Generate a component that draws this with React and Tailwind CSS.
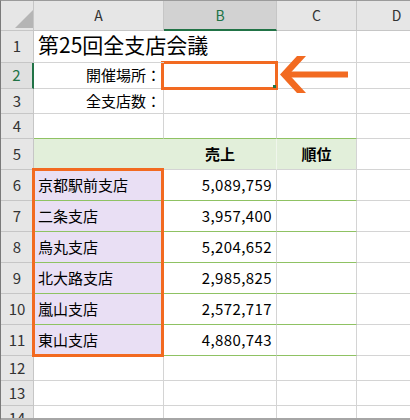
import React from "react";

const hdr = "bg-[#e6e6e6] border-r border-b border-[#c6c6c6] flex items-center justify-center text-[14px] text-[#333]";
const cell = "border-r border-b border-[#d4d4d4] flex items-center whitespace-nowrap";

const data = [
  ["京都駅前支店", "5,089,759"],
  ["二条支店", "3,957,400"],
  ["烏丸支店", "5,204,652"],
  ["北大路支店", "2,985,825"],
  ["嵐山支店", "2,572,717"],
  ["東山支店", "4,880,743"],
];

function RowHead({ n, sel }) {
  return (
    <div
      className={
        sel
          ? "bg-[#e0e0e0] border-r-2 border-b border-r-[#217346] border-b-[#c6c6c6] flex items-center justify-center text-[15px] text-[#217346]"
          : "bg-[#e6e6e6] border-r border-b border-[#c6c6c6] flex items-center justify-center text-[15px] text-[#333]"
      }
    >
      {n}
    </div>
  );
}

export default function App() {
  const rows = [];
  rows.push(
    <React.Fragment key="r1">
      <RowHead n={1} />
      <div className="border-b border-[#d4d4d4] flex items-center pl-[4px] pb-[3px] whitespace-nowrap text-[21px] text-black overflow-visible z-10">
        第25回全支店会議
      </div>
      <div className={cell}></div>
      <div className={cell}></div>
      <div className={cell}></div>
    </React.Fragment>
  );
  rows.push(
    <React.Fragment key="r2">
      <RowHead n={2} sel />
      <div className={cell + " justify-end pr-[2px] text-[15px] text-black"}>開催場所：</div>
      <div className={cell}></div>
      <div className={cell}></div>
      <div className={cell}></div>
    </React.Fragment>
  );
  rows.push(
    <React.Fragment key="r3">
      <RowHead n={3} />
      <div className={cell + " justify-end pr-[2px] text-[15px] text-black"}>全支店数：</div>
      <div className={cell}></div>
      <div className={cell}></div>
      <div className={cell}></div>
    </React.Fragment>
  );
  rows.push(
    <React.Fragment key="r4">
      <RowHead n={4} />
      <div className="border-r border-b border-r-[#d4d4d4] border-b-[#8fc263]"></div>
      <div className="border-r border-b border-r-[#d4d4d4] border-b-[#8fc263]"></div>
      <div className="border-r border-b border-r-[#d4d4d4] border-b-[#8fc263]"></div>
      <div className={cell}></div>
    </React.Fragment>
  );
  rows.push(
    <React.Fragment key="r5">
      <RowHead n={5} />
      <div className="bg-[#e2efda] border-r border-b border-r-[#e2efda] border-b-[#d4d4d4]"></div>
      <div className="bg-[#e2efda] border-r border-b border-r-[#f0f6ec] border-b-[#d4d4d4] flex items-center justify-center font-bold text-[15px] text-black">
        売上
      </div>
      <div className="bg-[#e2efda] border-r border-b border-[#d4d4d4] flex items-center justify-center font-bold text-[15px] text-black">
        順位
      </div>
      <div className={cell}></div>
    </React.Fragment>
  );
  data.forEach(([name, val], i) => {
    rows.push(
      <React.Fragment key={"d" + i}>
        <RowHead n={6 + i} />
        <div className="bg-[#e9dff4] border-r border-b border-r-[#d4d4d4] border-b-[#8fc263] flex items-center pl-[4px] whitespace-nowrap text-[15px] text-black">
          {name}
        </div>
        <div className="border-r border-b border-r-[#d4d4d4] border-b-[#8fc263] flex items-center justify-end pr-[4px] tracking-[0.4px] text-[15px] text-black">
          {val}
        </div>
        <div className="border-r border-b border-r-[#d4d4d4] border-b-[#8fc263]"></div>
        <div className={cell}></div>
      </React.Fragment>
    );
  });
  [12, 13, 14].forEach((n) => {
    rows.push(
      <React.Fragment key={"e" + n}>
        <RowHead n={n} />
        <div className={cell}></div>
        <div className={cell}></div>
        <div className={cell}></div>
        <div className={cell}></div>
      </React.Fragment>
    );
  });

  return (
    <div className="relative w-[410px] h-[420px] overflow-hidden bg-white border-t border-l border-b border-t-[#9b9b9b] border-l-[#7a7a7a] border-b-[#a6a6a6] font-['Noto_Sans_CJK_JP',sans-serif]">
      <div className="grid grid-cols-[33px_130px_113px_80px_80px] grid-rows-[30px_32px_26px_25px_25px_31px_31px_31px_31px_31px_31px_31px_25px_25px_25px]">
        <div className="bg-[#e6e6e6] border-r border-b border-[#c6c6c6] flex items-end justify-end pb-[2px]">
          <svg width="18" height="18" viewBox="0 0 18 18">
            <polygon points="18,0 18,18 0,18" fill="#b5b5b5" />
          </svg>
        </div>
        <div className={hdr}>A</div>
        <div className="bg-[#d2d2d2] border-r border-b-2 border-r-[#c6c6c6] border-b-[#217346] flex items-center justify-center text-[14px] text-[#217346]">
          B
        </div>
        <div className={hdr}>C</div>
        <div className={hdr}>D</div>
        {rows}
      </div>

      <div className="absolute left-[160px] top-[60px] w-[117px] h-[29px] border-[3px] border-[#f26a21]"></div>
      <div className="absolute left-[272px] top-[84px] w-[3px] h-[3px] bg-[#217346]"></div>
      <div className="absolute left-[31px] top-[167px] w-[132px] h-[189px] border-[3px] border-[#f26a21]"></div>
      <svg className="absolute left-[279px] top-[54px]" width="72" height="40" viewBox="0 0 72 40">
        <polygon points="0,19.5 17,1 26,1 9,19.5 26,38 17,38" fill="#f26a21" />
        <rect x="8" y="16.5" width="60" height="6" fill="#f26a21" />
      </svg>
      <div className="absolute left-0 bottom-0 w-full h-[1px] bg-[#a6a6a6]"></div>
    </div>
  );
}
